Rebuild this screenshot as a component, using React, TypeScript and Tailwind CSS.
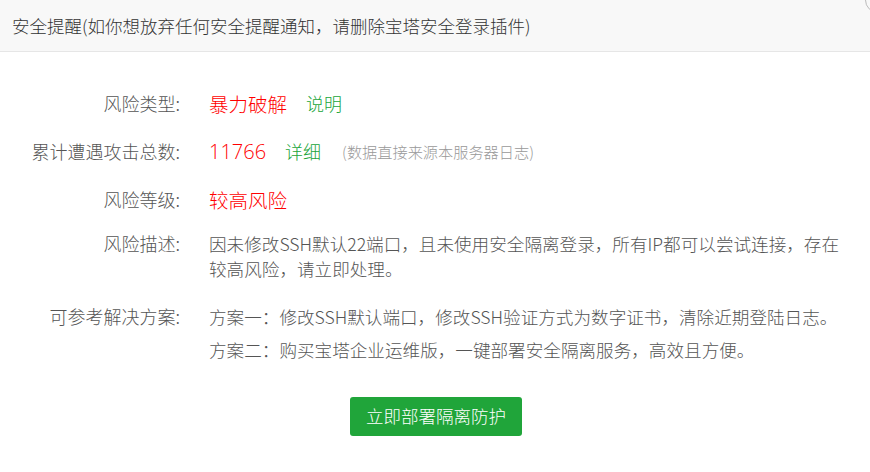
import React from "react";

const font = { fontFamily: '"Noto Sans CJK SC", "Liberation Sans", sans-serif' };
const numFont = { fontFamily: '"Open Sans", "Noto Sans CJK SC", sans-serif' };

function Row({ label, children, className = "" }: { label: string; children: React.ReactNode; className?: string }) {
  return (
    <div className={`flex items-start ${className}`}>
      <div className="w-[180px] shrink-0 text-right text-[18px] leading-[25px] text-[#555]">{label}</div>
      <div className="ml-[29px] flex-1">{children}</div>
    </div>
  );
}

export default function App() {
  return (
    <div className="relative w-[870px] h-[472px] overflow-hidden bg-white font-light" style={font}>
      <div className="absolute top-[-13px] right-[-21px] w-[26px] h-[26px] rounded-full border border-[#bbb]" />
      <div className="h-[52px] bg-[#f8f8f8] border-b border-[#e6e6e6] flex items-center px-[12px] pt-[2px] text-[17.5px] text-[#333] whitespace-nowrap">
        安全提醒(如你想放弃任何安全提醒通知，请删除宝塔安全登录插件)
      </div>

      <Row label="风险类型:" className="mt-[39px]">
        <div className="flex items-center h-[25px] whitespace-nowrap">
          <span className="text-[19.5px] text-[#ff0000]">暴力破解</span>
          <span className="ml-[19px] text-[18px] text-[#20a53a]">说明</span>
        </div>
      </Row>

      <Row label="累计遭遇攻击总数:" className="mt-[23px]">
        <div className="flex items-center h-[25px] whitespace-nowrap">
          <span className="text-[20px] text-[#ff0000] font-light" style={numFont}>11766</span>
          <span className="ml-[19px] text-[18px] text-[#20a53a]">详细</span>
          <span className="ml-[21px] text-[15.2px] text-[#999]">(数据直接来源本服务器日志)</span>
        </div>
      </Row>

      <Row label="风险等级:" className="mt-[23px]">
        <div className="h-[25px] flex items-center text-[19.5px] text-[#ff0000] whitespace-nowrap">较高风险</div>
      </Row>

      <Row label="风险描述:" className="mt-[19px]">
        <div className="text-[17.6px] leading-[25px] text-[#555] whitespace-nowrap">
          因未修改SSH默认22端口，且未使用安全隔离登录，所有IP都可以尝试连接，存在
          <br />
          较高风险，请立即处理。
        </div>
      </Row>

      <Row label="可参考解决方案:" className="mt-[23px]">
        <div className="flex flex-col gap-[8px] text-[17.6px] leading-[25px] text-[#555] whitespace-nowrap">
          <div>方案一：修改SSH默认端口，修改SSH验证方式为数字证书，清除近期登陆日志。</div>
          <div>方案二：购买宝塔企业运维版，一键部署安全隔离服务，高效且方便。</div>
        </div>
      </Row>

      <div className="flex justify-center mt-[35px] pl-[2px]">
        <button className="w-[172px] h-[39px] rounded-[3px] bg-[#20a53a] text-white text-[17.5px] flex items-center justify-center">
          立即部署隔离防护
        </button>
      </div>
    </div>
  );
}
